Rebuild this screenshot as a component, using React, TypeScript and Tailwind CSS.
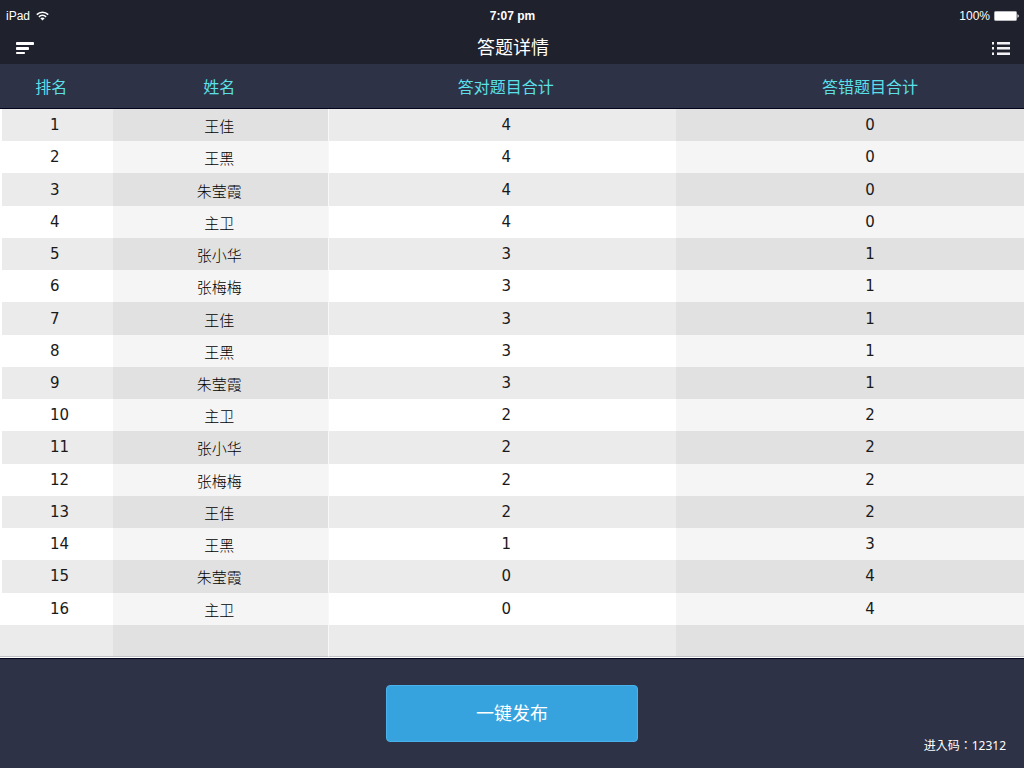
import React from 'react';

interface Row {
  rank: number;
  name: string;
  right: number;
  wrong: number;
}

const ROWS: Row[] = [
  { rank: 1, name: '王佳', right: 4, wrong: 0 },
  { rank: 2, name: '王黑', right: 4, wrong: 0 },
  { rank: 3, name: '朱莹霞', right: 4, wrong: 0 },
  { rank: 4, name: '主卫', right: 4, wrong: 0 },
  { rank: 5, name: '张小华', right: 3, wrong: 1 },
  { rank: 6, name: '张梅梅', right: 3, wrong: 1 },
  { rank: 7, name: '王佳', right: 3, wrong: 1 },
  { rank: 8, name: '王黑', right: 3, wrong: 1 },
  { rank: 9, name: '朱莹霞', right: 3, wrong: 1 },
  { rank: 10, name: '主卫', right: 2, wrong: 2 },
  { rank: 11, name: '张小华', right: 2, wrong: 2 },
  { rank: 12, name: '张梅梅', right: 2, wrong: 2 },
  { rank: 13, name: '王佳', right: 2, wrong: 2 },
  { rank: 14, name: '王黑', right: 1, wrong: 3 },
  { rank: 15, name: '朱莹霞', right: 0, wrong: 4 },
  { rank: 16, name: '主卫', right: 0, wrong: 4 },
];

const WifiIcon = () => (
  <svg width="13" height="10" viewBox="0 0 13 10" fill="none" stroke="#fff" strokeWidth="1.6">
    <path d="M0.8 3.6C4 0.5 9 0.5 12.2 3.6" />
    <path d="M2.9 5.8C4.9 3.9 8.1 3.9 10.1 5.8" />
    <path d="M6.5 9.6L4.3 7.3C5.5 6.2 7.5 6.2 8.7 7.3Z" fill="#fff" stroke="none" />
  </svg>
);

const BatteryIcon = () => (
  <svg width="25" height="10" viewBox="0 0 25 10">
    <rect x="0.5" y="0.5" width="22" height="9" rx="1" fill="#fff" stroke="#b9bac0" />
    <path d="M23.5 3.2C25.2 3.8 25.2 6.2 23.5 6.8Z" fill="#fff" />
  </svg>
);

const SortIcon = () => (
  <svg width="18" height="12" viewBox="0 0 18 12" fill="#fff">
    <rect x="0" y="0" width="18" height="3" rx="0.8" />
    <rect x="0" y="5" width="13" height="3" rx="0.8" />
    <rect x="0" y="10" width="9" height="2" rx="0.8" />
  </svg>
);

const ListIcon = () => (
  <svg width="18" height="13" viewBox="0 0 18 13" fill="#f2f2f4">
    <path d="M0 0h2v3H0zM0 5h2v3H0zM0 10h2v3H0z" />
    <path d="M5 0h13v3H5zM5 5h13v3H5zM5 10h13v3H5z" />
    <path d="M0 2h2v1H0zM0 7h2v1H0zM0 10h2v1H0zM5 2h13v1H5zM5 7h13v1H5zM5 10h13v1H5z" fill="#8f9098" />
  </svg>
);

const StatusBar = () => (
  <div className="grid h-8 grid-cols-3 items-center pl-[6px] pr-[5px] font-['Liberation_Sans',sans-serif] text-xs text-white">
    <div className="flex items-center gap-[6px]">
      <span>iPad</span>
      <WifiIcon />
    </div>
    <div className="text-center font-bold">7:07 pm</div>
    <div className="flex items-center justify-end gap-1">
      <span>100%</span>
      <BatteryIcon />
    </div>
  </div>
);

const NavBar = () => (
  <header className="flex h-8 items-center justify-between pl-4 pr-[14px]">
    <button type="button" aria-label="排序">
      <SortIcon />
    </button>
    <h1 className="pb-1 text-lg leading-6 text-white">答题详情</h1>
    <button type="button" aria-label="列表">
      <ListIcon />
    </button>
  </header>
);

const ScoreTable = () => (
  <table className="h-full w-full table-fixed border-separate border-spacing-0">
    <colgroup>
      <col className="w-[11%]" />
      <col className="w-[21%]" />
      <col className="w-[34%]" />
      <col className="w-[34%]" />
    </colgroup>
    <thead>
      <tr className="h-[45px] bg-[#2e3246] text-base leading-6 text-[#5be0e9] [&>th]:border-b [&>th]:border-[#04041c] [&>th]:p-0 [&>th]:font-normal">
        <th className="pr-2.5!">排名</th>
        <th className="pr-0.5!">姓名</th>
        <th className="pl-2!">答对题目合计</th>
        <th className="pl-10!">答错题目合计</th>
      </tr>
    </thead>
    <tbody className="font-['DejaVu_Sans','Noto_Sans_CJK_SC',sans-serif] text-[15px] leading-5 text-[#1a1a1a] [&>tr]:h-8 [&_td]:p-0 [&_td]:text-center">
      {ROWS.map((row) => (
        <tr key={row.rank} className="group">
          <td className="border-l-2 border-white bg-white pl-12! text-left! group-odd:bg-[#ebebeb]">{row.rank}</td>
          <td className="bg-[#f5f5f5] pt-0.5! pr-0.5! font-['Noto_Sans_CJK_SC',sans-serif] font-light text-black group-odd:bg-[#e1e1e1]">{row.name}</td>
          <td className="border-l border-[#f8f8f8] bg-white pl-2! group-odd:bg-[#ebebeb]">{row.right}</td>
          <td className="bg-[#f5f5f5] pl-10! group-odd:bg-[#e1e1e1]">{row.wrong}</td>
        </tr>
      ))}
      <tr className="[&>td]:border-b [&>td]:border-b-[#c0c0c6]">
        <td className="bg-[#ebebeb]" />
        <td className="bg-[#e1e1e1]" />
        <td className="border-l border-l-[#f8f8f8] bg-[#ebebeb]" />
        <td className="bg-[#e1e1e1]" />
      </tr>
    </tbody>
  </table>
);

export default function App() {
  return (
    <div className="flex h-screen flex-col bg-white font-['Noto_Sans_CJK_SC',sans-serif]">
      <div className="bg-[#1f212d]">
        <StatusBar />
        <NavBar />
      </div>
      <main className="min-h-0 flex-1 pb-px">
        <ScoreTable />
      </main>
      <footer className="relative flex h-[110px] items-center justify-center border-t border-[#04041c] bg-[#2e3246] text-white">
        <button type="button" className="h-[57px] w-[252px] rounded border border-[#4bb1ea] bg-[#36a2de] pb-1 text-lg">
          一键发布
        </button>
        <p className="absolute right-[18px] bottom-3 font-['Noto_Sans','Noto_Sans_CJK_TC',sans-serif] text-xs leading-5">进入码：12312</p>
      </footer>
    </div>
  );
}
